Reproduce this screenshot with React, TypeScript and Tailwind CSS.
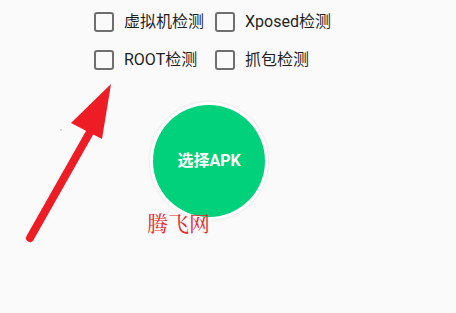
import React from "react";

function Check({ label }: { label: string }) {
  return (
    <div className="flex items-center h-[20px]">
      <div className="w-[20px] h-[20px] border-2 border-[#6f6f6f] rounded-[3px] box-border" />
      <span className="ml-[10px] text-[16px] leading-none text-[#1f1f1f]">{label}</span>
    </div>
  );
}

export default function App() {
  return (
    <div
      className="relative w-[456px] h-[313px] bg-[#fafafa] overflow-hidden"
      style={{ fontFamily: 'Roboto, "Noto Sans CJK SC", sans-serif' }}
    >
      <div className="pl-[94px] pt-[12px] grid grid-cols-[121px_auto] gap-y-[18px]">
        <Check label="虚拟机检测" />
        <Check label="Xposed检测" />
        <Check label="ROOT检测" />
        <Check label="抓包检测" />
      </div>
      <div className="ml-[150px] mt-[32px] w-[118px] h-[118px] rounded-full bg-white shadow-[0_0_3px_rgba(0,0,0,0.12)] flex items-center justify-center">
        <div className="w-[112px] h-[112px] rounded-full bg-[#00d17a] flex items-center justify-center">
          <span className="text-white font-bold text-[16px] leading-none">选择APK</span>
        </div>
      </div>
      <div
        className="absolute left-[147px] top-[212px] text-[21px] leading-none text-[#e8262c]"
        style={{ fontFamily: '"Noto Serif CJK SC", serif' }}
      >
        腾飞网
      </div>
      <svg className="absolute left-0 top-0" width="456" height="313" viewBox="0 0 456 313">
        <line x1="30" y1="238" x2="90" y2="132" stroke="#ee1c25" strokeWidth="8" strokeLinecap="round" />
        <polygon points="111,84 71,123 102,139" fill="#ee1c25" />
        <rect x="60.5" y="129.5" width="1" height="1" fill="#777" />
      </svg>
    </div>
  );
}
